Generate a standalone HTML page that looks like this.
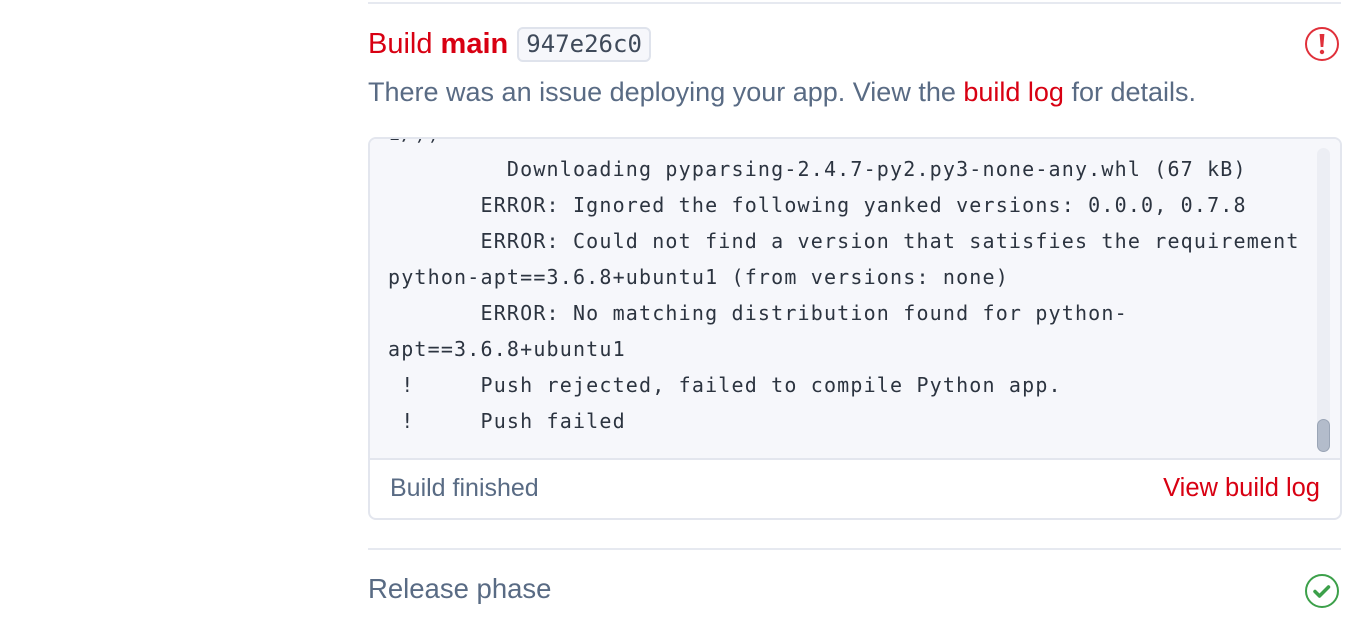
<!DOCTYPE html>
<html><head><meta charset="utf-8"><style>
*{margin:0;padding:0;box-sizing:border-box}
body{width:1360px;height:622px;background:#fff;position:relative;overflow:hidden;font-family:"Liberation Sans",sans-serif}
.abs{position:absolute}
.hr{position:absolute;left:368px;width:973px;height:2px;background:#e6e9f0}
.title{left:368px;top:26px;font-size:29px;color:#d80012;line-height:36px;white-space:nowrap}
.chip{display:inline-block;font-family:"DejaVu Sans Mono",monospace;font-size:24px;color:#3f4a5a;background:#f6f7fb;border:2px solid #dfe3ec;border-radius:6px;padding:0 7px;line-height:31px;vertical-align:top;margin-left:1px;margin-top:1px}
.sub{left:368px;top:75px;font-size:27px;color:#596b84;white-space:nowrap;line-height:34px}
.sub span{color:#d80012}
.box{left:368px;top:137px;width:974px;height:383px;border:2px solid #e3e6ee;border-radius:8px;overflow:hidden}
.log{position:absolute;left:0;top:0;width:970px;height:321px;background:#f6f7fb;border-bottom:2px solid #e3e6ee;overflow:hidden}
.log pre{position:absolute;left:18px;top:-24px;font-family:"DejaVu Sans Mono",monospace;font-size:20px;letter-spacing:1.17px;line-height:36px;color:#2c3440}
.track{position:absolute;left:947px;top:9px;width:13px;height:304px;background:#eceef4;border-radius:7px}
.thumb{position:absolute;left:947px;top:280px;width:13px;height:33px;background:#b3bccb;border:1px solid #9aa5b6;border-radius:7px}
.foot{position:absolute;left:20px;top:335px;font-size:25px;color:#596b84}
.vlog{position:absolute;right:20px;top:335px;font-size:25.5px;color:#d80012}
.rel{left:368px;top:573px;font-size:27.5px;color:#596b84}
</style></head><body>
<div class="hr" style="top:2px"></div>
<div class="abs title">Build <b>main</b> <span class="chip">947e26c0</span></div>
<svg class="abs" style="left:1304px;top:26px" width="36" height="36" viewBox="0 0 36 36"><circle cx="18" cy="18" r="16" fill="none" stroke="#e0303a" stroke-width="2"/><path d="M15.6 8h4.8l-1.1 13h-2.6z" fill="#e0303a"/><circle cx="18" cy="26" r="2.2" fill="#e0303a"/></svg>
<div class="abs sub">There was an issue deploying your app. View the <span>build log</span> for details.</div>
<div class="abs box">
<div class="log"><pre>1/))
         Downloading pyparsing-2.4.7-py2.py3-none-any.whl (67 kB)
       ERROR: Ignored the following yanked versions: 0.0.0, 0.7.8
       ERROR: Could not find a version that satisfies the requirement
python-apt==3.6.8+ubuntu1 (from versions: none)
       ERROR: No matching distribution found for python-
apt==3.6.8+ubuntu1
 !     Push rejected, failed to compile Python app.
 !     Push failed</pre>
<div class="track"></div><div class="thumb"></div></div>
<div class="foot">Build finished</div>
<div class="vlog">View build log</div>
</div>
<div class="hr" style="top:548px"></div>
<div class="abs rel">Release phase</div>
<svg class="abs" style="left:1304px;top:573px" width="36" height="36" viewBox="0 0 36 36"><circle cx="18" cy="18" r="16" fill="none" stroke="#3ca04a" stroke-width="2"/><path d="M11 18.5l4.5 4.5 9-9" fill="none" stroke="#3ca04a" stroke-width="3.5" stroke-linecap="round" stroke-linejoin="round"/></svg>
</body></html>
